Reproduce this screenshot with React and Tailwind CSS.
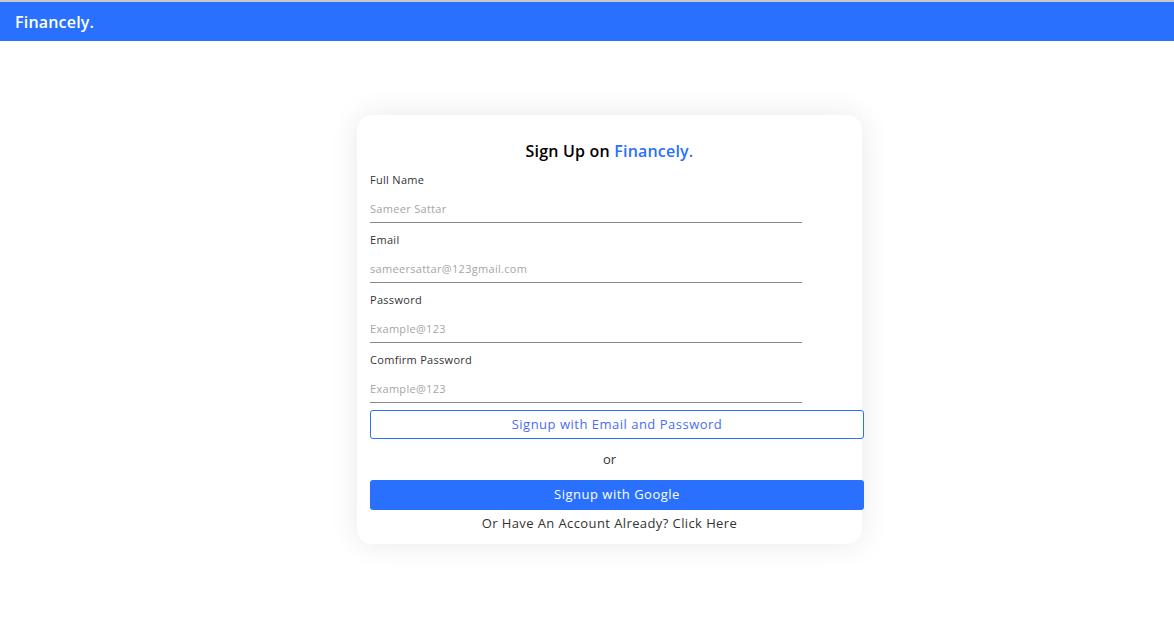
export default function App() {
  const fields = [
    { label: "Full Name", placeholder: "Sameer Sattar", type: "text" },
    { label: "Email", placeholder: "sameersattar@123gmail.com", type: "email" },
    { label: "Password", placeholder: "Example@123", type: "password" },
    { label: "Comfirm Password", placeholder: "Example@123", type: "password" },
  ];

  return (
    <div className="min-h-screen bg-white font-['Open_Sans',sans-serif]">
      <div className="h-[2px] bg-[#c8c8c8]" />
      <div className="h-[39px] bg-[#2970ff] flex items-center px-[15px]">
        <p className="text-white text-[16px] font-semibold tracking-[0.2px]">Financely.</p>
      </div>

      <div className="flex justify-center pl-[45px] pt-[74px]">
        <div className="w-[505px] bg-white rounded-[15px] shadow-[0_0_30px_rgba(0,0,0,0.09)] pt-[26px] px-[13px] pb-[12px]">
          <h2 className="text-center text-[16px] leading-[20px] font-semibold text-black tracking-[0.2px]">
            Sign Up on <span className="text-[#2970ff]">Financely.</span>
          </h2>

          <div className="mt-[11px]">
            {fields.map((f) => (
              <div key={f.label} className="mb-[9px] last:mb-0">
                <p className="text-[11px] leading-[15px] text-[#333] tracking-[0.3px]">{f.label}</p>
                <input
                  type={f.type}
                  placeholder={f.placeholder}
                  className="block w-[432px] h-[36px] pt-[7px] text-[11px] tracking-[0.3px] text-[#333] placeholder:text-[#a5a5a5] border-b border-[#8a8a8a] outline-none bg-transparent"
                />
              </div>
            ))}
          </div>

          <button className="mt-[7px] w-[494px] h-[29px] border border-[#2970ff] rounded-[3px] text-[#4a6cf7] text-[13px] tracking-[0.5px] bg-white">
            Signup with Email and Password
          </button>
          <p className="text-center text-[13px] leading-[20px] text-[#333] mt-[10px]">or</p>
          <button className="mt-[11px] w-[494px] h-[30px] bg-[#2970ff] rounded-[3px] text-white text-[13px] tracking-[0.5px]">
            Signup with Google
          </button>
          <p className="text-center text-[13px] leading-[18px] text-[#333] mt-[4px] tracking-[0.4px]">
            Or Have An Account Already? Click Here
          </p>
        </div>
      </div>
    </div>
  );
}
